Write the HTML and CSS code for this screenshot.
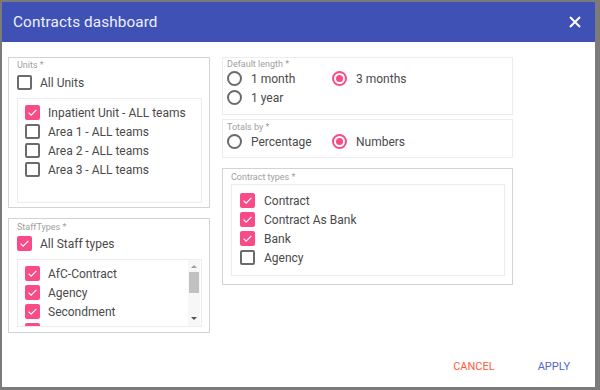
FILE: index.html
```html
<!DOCTYPE html>
<html lang="en">
<head>
  <meta charset="UTF-8" />
  <title>Contracts dashboard</title>
  <link rel="stylesheet" href="styles.css">
</head>
<body>
  <div class="dialog">
    <header class="dialog-head">
      <h1 class="title">Contracts dashboard</h1>
      <button class="close" aria-label="Close">
        <svg width="12" height="12" viewBox="0 0 12 12"><path d="M1 1L11 11M11 1L1 11" /></svg>
      </button>
    </header>

    <div class="dialog-body">
      <!-- Левая колонка -->
      <div class="col col-left">
        <div class="group units">
          <div class="group-label">Units *</div>
          <div class="row row-all"><span class="cb"></span><span>All Units</span></div>
          <div class="list list-units">
            <div class="row"><span class="cb on"><svg viewBox="0 0 15 15"><path d="M3.6 7.6l2.5 2.5 5.3-5.3" /></svg></span><span>Inpatient Unit - ALL teams</span></div>
            <div class="row"><span class="cb"></span><span>Area 1 - ALL teams</span></div>
            <div class="row"><span class="cb"></span><span>Area 2 - ALL teams</span></div>
            <div class="row"><span class="cb"></span><span>Area 3 - ALL teams</span></div>
          </div>
        </div>

        <div class="group staff">
          <div class="group-label">StaffTypes *</div>
          <div class="row row-all"><span class="cb on"><svg viewBox="0 0 15 15"><path d="M3.6 7.6l2.5 2.5 5.3-5.3" /></svg></span><span>All Staff types</span></div>
          <div class="list list-staff">
            <div class="list-items">
              <div class="row"><span class="cb on"><svg viewBox="0 0 15 15"><path d="M3.6 7.6l2.5 2.5 5.3-5.3" /></svg></span><span>AfC-Contract</span></div>
              <div class="row"><span class="cb on"><svg viewBox="0 0 15 15"><path d="M3.6 7.6l2.5 2.5 5.3-5.3" /></svg></span><span>Agency</span></div>
              <div class="row"><span class="cb on"><svg viewBox="0 0 15 15"><path d="M3.6 7.6l2.5 2.5 5.3-5.3" /></svg></span><span>Secondment</span></div>
              <!-- следующий пункт виден только краем -->
              <div class="row"><span class="cb on"></span></div>
            </div>
            <div class="scrollbar">
              <span class="arrow up"></span>
              <span class="thumb"></span>
              <span class="track"></span>
              <span class="arrow down"></span>
            </div>
          </div>
        </div>
      </div>

      <!-- Средняя колонка -->
      <div class="col col-mid">
        <div class="group light length">
          <div class="group-label">Default length *</div>
          <div class="radios">
            <div class="row"><span class="rb"></span><span>1 month</span></div>
            <div class="row"><span class="rb on"></span><span>3 months</span></div>
            <div class="row"><span class="rb"></span><span>1 year</span></div>
          </div>
        </div>

        <div class="group light totals">
          <div class="group-label">Totals by *</div>
          <div class="radios">
            <div class="row"><span class="rb"></span><span>Percentage</span></div>
            <div class="row"><span class="rb on"></span><span>Numbers</span></div>
          </div>
        </div>

        <div class="group contracts">
          <div class="group-label">Contract types *</div>
          <div class="list list-contracts">
            <div class="row"><span class="cb on"><svg viewBox="0 0 15 15"><path d="M3.6 7.6l2.5 2.5 5.3-5.3" /></svg></span><span>Contract</span></div>
            <div class="row"><span class="cb on"><svg viewBox="0 0 15 15"><path d="M3.6 7.6l2.5 2.5 5.3-5.3" /></svg></span><span>Contract As Bank</span></div>
            <div class="row"><span class="cb on"><svg viewBox="0 0 15 15"><path d="M3.6 7.6l2.5 2.5 5.3-5.3" /></svg></span><span>Bank</span></div>
            <div class="row"><span class="cb"></span><span>Agency</span></div>
          </div>
        </div>
      </div>
    </div>

    <footer class="dialog-foot">
      <button class="btn btn-cancel">Cancel</button>
      <button class="btn btn-apply">Apply</button>
    </footer>
  </div>
</body>
</html>
```

FILE: styles.css
```css
html, body {
  margin: 0;
  padding: 0;
  height: 100%;
  background: #7b7b7b;
  font-family: Roboto, "Noto Sans", Arial, sans-serif;
}

.dialog {
  margin: 2px 0 0 2px;
  width: 593px;
  height: 385px;
  background: #fff;
  display: flex;
  flex-direction: column;
  box-sizing: border-box;
}

/* Шапка */
.dialog-head {
  height: 40px;
  flex: none;
  background: #3f51b5;
  display: flex;
  align-items: center;
  justify-content: space-between;
  padding: 0 14px 0 11px;
  box-sizing: border-box;
}

.title {
  margin: 0;
  font-size: 15.3px;
  font-weight: 400;
  color: #eef0fb;
  letter-spacing: 0.1px;
}

.close {
  background: none;
  border: none;
  padding: 0;
  width: 12px;
  height: 12px;
  display: flex;
  cursor: pointer;
}

.close path {
  stroke: #fff;
  stroke-width: 2;
  fill: none;
}

/* Тело */
.dialog-body {
  flex: 1;
  display: flex;
  gap: 12px;
  padding: 15px 0 0 6px;
}

.col {
  display: flex;
  flex-direction: column;
}

.col-left {
  width: 202px;
  gap: 10px;
}

.col-mid {
  width: 291px;
}

.group {
  border: 1px solid #d3d3d3;
  box-sizing: border-box;
  display: flex;
  flex-direction: column;
}

.group.light {
  border-color: #ececec;
}

.group-label {
  font-size: 9px;
  line-height: 10px;
  color: #a0a0a0;
}

.row {
  display: flex;
  align-items: center;
  gap: 8px;
  height: 19px;
  font-size: 12px;
  color: #4a4a4a;
  white-space: nowrap;
  flex: none;
}

.list {
  border: 1px solid #ececec;
  box-sizing: border-box;
}

/* Units */
.units {
  height: 151px;
  padding: 2px 7px 4px 8px;
}

.units .row-all {
  margin-top: 3px;
}

.list-units {
  margin-top: 6px;
  height: 105px;
  padding: 4px 7px;
}

/* StaffTypes */
.staff {
  height: 115px;
  padding: 3px 7px 5px 8px;
}

.staff .row-all {
  margin-top: 2px;
}

.list-staff {
  margin-top: 6px;
  height: 68px;
  display: flex;
  overflow: hidden;
}

.list-items {
  flex: 1;
  padding: 4px 7px 0;
  overflow: hidden;
}

.scrollbar {
  width: 12px;
  margin-right: 1px;
  display: flex;
  flex-direction: column;
  align-items: center;
  background: #f7f7f7;
}

.arrow {
  width: 0;
  height: 0;
  border-left: 3px solid transparent;
  border-right: 3px solid transparent;
  flex: none;
}

.arrow.up {
  border-bottom: 3px solid #a0a0a0;
  margin: 5px 0 4px;
}

.arrow.down {
  border-top: 3px solid #505050;
  margin: 4px 0 6px;
}

.thumb {
  width: 10px;
  height: 21px;
  background: #c1c1c1;
  flex: none;
}

.track {
  flex: 1;
}

/* Чекбоксы */
.cb {
  width: 15px;
  height: 15px;
  box-sizing: border-box;
  border: 2px solid #6b6b6b;
  border-radius: 2px;
  flex: none;
  display: flex;
}

.cb.on {
  background: #f84b87;
  border-color: #f84b87;
}

.cb svg {
  width: 15px;
  height: 15px;
  margin: -2px;
}

.cb path {
  fill: none;
  stroke: #fff;
  stroke-width: 1.2;
}

/* Радио */
.radios {
  display: grid;
  grid-template-columns: 105px 1fr;
}

.rb {
  width: 15px;
  height: 15px;
  box-sizing: border-box;
  border: 2px solid #6b6b6b;
  border-radius: 50%;
  flex: none;
  display: flex;
  align-items: center;
  justify-content: center;
}

.rb.on {
  border-color: #f84b87;
}

.rb.on::after {
  content: "";
  width: 7px;
  height: 7px;
  border-radius: 50%;
  background: #f84b87;
}

.radios .row {
  gap: 9px;
}

.length {
  height: 58px;
  padding: 1px 4px 0;
}

.totals {
  height: 39px;
  margin-top: 4px;
  padding: 2px 4px 0;
}

/* Contract types */
.contracts {
  height: 117px;
  margin-top: 10px;
  padding: 3px 7px 8px 8px;
}

.list-contracts {
  margin-top: 2px;
  height: 92px;
  padding: 6px 8px 0;
}

.list-contracts .row {
  gap: 9px;
}

/* Подвал */
.dialog-foot {
  height: 42px;
  flex: none;
  display: flex;
  align-items: center;
  justify-content: flex-end;
  padding-right: 17px;
  gap: 27px;
}

.btn {
  background: none;
  border: none;
  height: 30px;
  padding: 0 8px;
  font-family: Roboto, "Noto Sans", Arial, sans-serif;
  font-size: 11px;
  text-transform: uppercase;
  cursor: pointer;
}

.btn-cancel {
  color: #ff5b3a;
}

.btn-apply {
  color: #5566c6;
}
```
